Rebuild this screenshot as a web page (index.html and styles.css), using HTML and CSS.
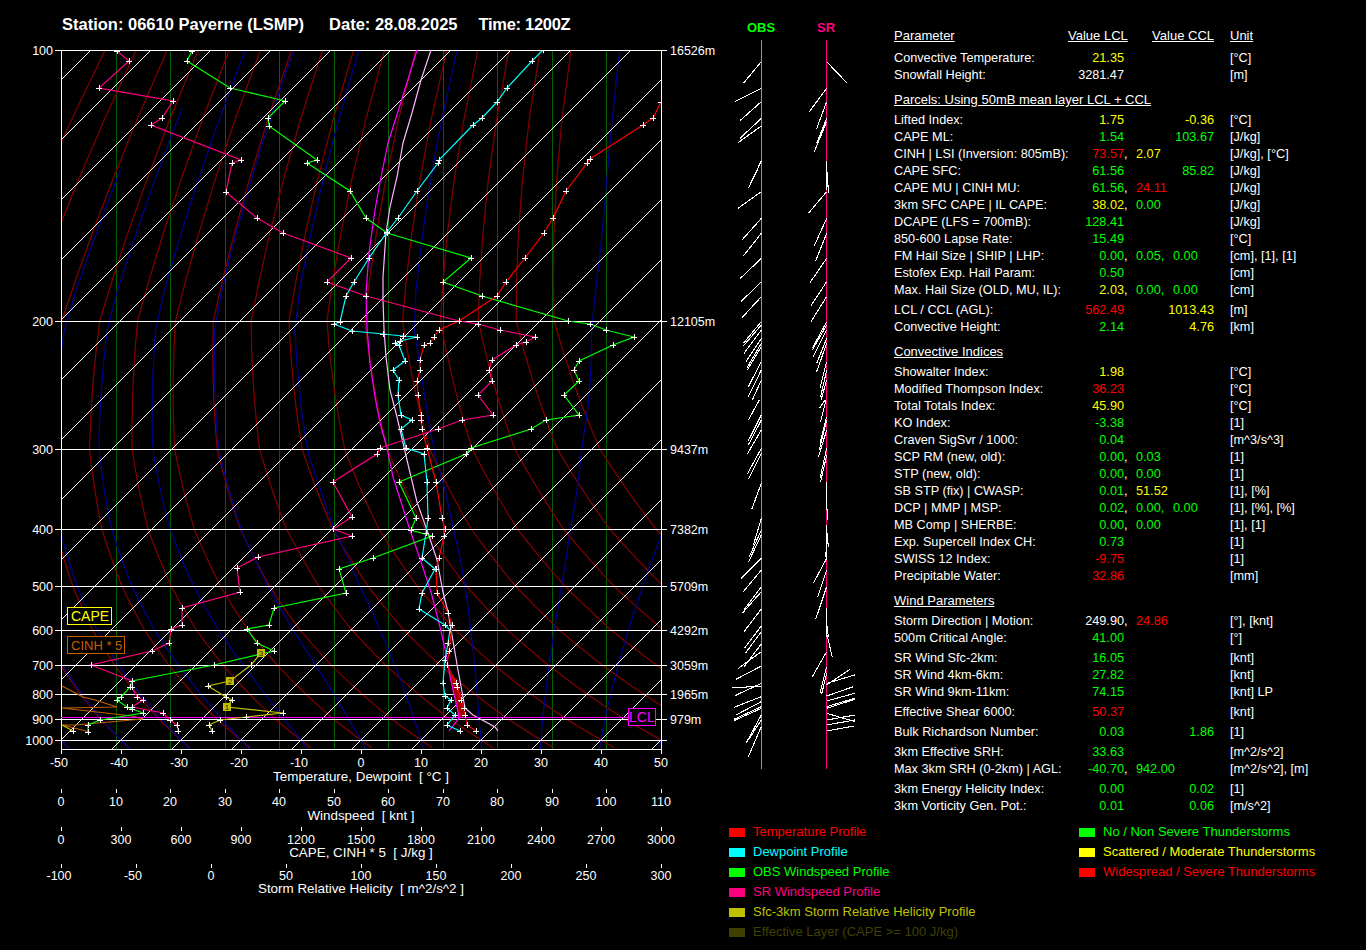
FILE: index.html
```html
<!DOCTYPE html>
<html lang="en">
<head>
<meta charset="utf-8">
<title>Station 06610 Payerne sounding</title>
<link rel="stylesheet" href="styles.css">
</head>
<body>
<div class="page">
  <section class="left">
    <header class="title">
      <span>Station: 06610 Payerne (LSMP)</span>
      <span>Date: 28.08.2025</span>
      <span>Time: 1200Z</span>
    </header>
    <svg class="chart" viewBox="0 40 720 910" width="720" height="910">
      <defs>
        <clipPath id="plot"><rect x="61" y="50" width="600" height="699"/></clipPath>
        <marker id="pt" markerUnits="userSpaceOnUse" markerWidth="8" markerHeight="8" refX="4" refY="4" overflow="visible"><path class="cross" d="M1 4H7M4 1V7"/></marker>
      </defs>
      <g id="grid" clip-path="url(#plot)"></g>

      <g class="isobars">
        <path d="M55 50.5H667M55 321.5H667M55 449.5H667M55 529.5H667M55 586.5H667M55 630.5H667M55 665.5H667M55 694.5H667M55 719.5H667M55 740.5H667"/>
        <path d="M61.5 50V749H661.5V50"/>
        <path d="M61.5 749v5M121.5 749v5M181.5 749v5M241.5 749v5M301.5 749v5M361.5 749v5M421.5 749v5M481.5 749v5M541.5 749v5M601.5 749v5M661.5 749v5"/>
        <path d="M61.5 789v4M116 789v4M170.5 789v4M225 789v4M279.5 789v4M334 789v4M388.5 789v4M443 789v4M497.5 789v4M552 789v4M606.5 789v4M661 789v4"/>
        <path d="M61.5 827v4M121.5 827v4M181.5 827v4M241.5 827v4M301.5 827v4M361.5 827v4M421.5 827v4M481.5 827v4M541.5 827v4M601.5 827v4M661.5 827v4"/>
        <path d="M61.5 864v4M136.5 864v4M211.5 864v4M286.5 864v4M361.5 864v4M436.5 864v4M511.5 864v4M586.5 864v4M661.5 864v4"/>
      </g>

      <g clip-path="url(#plot)" class="profiles">
        <polygon class="cape" points="449,670 458,683 462,697 458,700 465,708 465,716 459,719 456,705"/>
        <polyline class="cin" points="62,686 83,697 95,700 117,707 62,708 132,716 143,719 75,725 62,725 90,732"/>
        <polyline class="parcel" points="417,50 401,102 388,143 380,182 375,210 369,253 366,293 367,328 370,363 375,397 380,423 387,448 393,477 410,530 418,553 428,583 431,592 440,627 446,653 450,677 457,707 459,718 449,731"/>
        <polyline class="virtual" points="431,50 421,80 412,113 403,143 397,177 390,207 386,233 383,277 383,300 384,329 386,357 390,390 397,417 407,460 417,502 428,533 437,560 443,592 448,612 458,670 463,697 465,708 473,715 495,727 498,731"/>
        <path class="lcl" d="M61 717.5H628"/>
        <polyline class="obs" marker-start="url(#pt)" marker-mid="url(#pt)" marker-end="url(#pt)" points="192,51 187,61 230,88 285,101 268,118 269,126 317,160 307,163 350,191 366,218 387,233 471,258 443,282 482,296 568,321 590,324 606,330 634,337 613,345 579,361 574,370 579,381 564,395 579,415 546,420 531,429 471,448 466,454 399,482 416,518 411,530 432,536 373,558 339,569 346,593 274,608 269,625 247,629 257,643 274,651 214,665 132,681 130,687 121,697 117,700 127,707 132,709 143,713 100,720 88,725 88,732"/>
        <polyline class="sr" marker-start="url(#pt)" marker-mid="url(#pt)" marker-end="url(#pt)" points="117,51 129,61 99,88 173,101 162,118 151,125 241,160 232,163 226,192 257,218 283,233 351,258 327,282 366,296 459,321 478,324 500,330 535,337 526,342 516,345 492,360 489,370 492,381 478,395 493,415 462,420 438,429 380,448 377,454 333,482 352,517 333,529 352,536 258,557 237,568 240,592 182,608 182,625 171,629 169,643 152,651 91,665 132,681 132,687 137,697 143,700 132,707 163,713 170,720 177,725 178,731"/>
        <polyline class="dew" marker-start="url(#pt)" marker-mid="url(#pt)" marker-end="url(#pt)" points="543,50 532,61 507,88 497,102 482,118 473,125 439,160 438,163 417,191 398,218 387,232 369,258 354,282 346,296 340,322 334,324 352,331 383,334 403,336 417,337 400,341 395,343 399,345 405,361 393,370 399,380 398,395 401,415 412,420 401,429 406,448 424,454 427,482 428,518 426,533 422,558 435,569 422,593 419,609 445,625 450,630 448,643 445,660 443,683 445,696 451,700 447,708 455,715 447,725 460,731"/>
        <polyline class="temp" marker-start="url(#pt)" marker-mid="url(#pt)" marker-end="url(#pt)" points="661,102 653,118 643,125 590,159 587,163 566,191 553,218 544,233 525,258 506,282 497,296 459,321 439,330 434,337 430,343 424,345 420,360 420,370 417,381 418,395 421,415 421,420 422,429 427,448 436,482 442,518 445,529 444,536 439,558 436,569 437,593 448,613 452,625 449,651 447,665 456,683 457,687 461,700 464,708 465,715 467,725 476,731"/>
        <polyline class="srh" marker-mid="url(#pt)" marker-end="url(#pt)" points="261,653 251,665 230,681 208,686 226,697 232,700 227,707 283,713 246,717 220,720 209,725 212,731"/>
        <polyline class="srh" marker-end="url(#pt)" points="62,725 73,731"/>
        <g class="srhbox">
          <rect x="257" y="649" width="8" height="8"/><rect x="226" y="677" width="8" height="8"/><rect x="223" y="703" width="8" height="8"/>
        </g>
        <g class="srhnum">
          <text x="261" y="656">3</text><text x="230" y="684">2</text><text x="227" y="710">1</text>
        </g>
      </g>

      <g class="tags">
        <rect class="tag-cape" x="67.5" y="607.5" width="44" height="17"/>
        <text class="tagtxt-cape" x="71" y="621">CAPE</text>
        <rect class="tag-cin" x="67.5" y="636.5" width="57" height="17"/>
        <text class="tagtxt-cin" x="71" y="650">CINH * 5</text>
        <rect class="tag-lcl" x="628.5" y="708.5" width="27" height="17"/>
        <text class="tagtxt-lcl" x="629" y="722">LCL</text>
      </g>

      <g class="ax end">
        <text x="53" y="55">100</text><text x="53" y="326">200</text><text x="53" y="454">300</text><text x="53" y="534">400</text><text x="53" y="591">500</text><text x="53" y="635">600</text><text x="53" y="670">700</text><text x="53" y="699">800</text><text x="53" y="724">900</text><text x="53" y="745">1000</text>
      </g>
      <g class="ax">
        <text x="670" y="55">16526m</text><text x="670" y="326">12105m</text><text x="670" y="454">9437m</text><text x="670" y="534">7382m</text><text x="670" y="591">5709m</text><text x="670" y="635">4292m</text><text x="670" y="670">3059m</text><text x="670" y="699">1965m</text><text x="670" y="724">979m</text>
      </g>
      <g class="ax mid">
        <text x="59" y="767">-50</text><text x="119" y="767">-40</text><text x="179" y="767">-30</text><text x="239" y="767">-20</text><text x="299" y="767">-10</text><text x="361" y="767">0</text><text x="421" y="767">10</text><text x="481" y="767">20</text><text x="541" y="767">30</text><text x="601" y="767">40</text><text x="661" y="767">50</text>
        <text class="tt" x="361" y="781">Temperature, Dewpoint  [ °C ]</text>
        <text x="61" y="806">0</text><text x="116" y="806">10</text><text x="170" y="806">20</text><text x="225" y="806">30</text><text x="279" y="806">40</text><text x="334" y="806">50</text><text x="388" y="806">60</text><text x="443" y="806">70</text><text x="497" y="806">80</text><text x="552" y="806">90</text><text x="606" y="806">100</text><text x="661" y="806">110</text>
        <text class="tt" x="361" y="820">Windspeed  [ knt ]</text>
        <text x="61" y="844">0</text><text x="121" y="844">300</text><text x="181" y="844">600</text><text x="241" y="844">900</text><text x="301" y="844">1200</text><text x="361" y="844">1500</text><text x="421" y="844">1800</text><text x="481" y="844">2100</text><text x="541" y="844">2400</text><text x="601" y="844">2700</text><text x="661" y="844">3000</text>
        <text class="tt" x="361" y="857">CAPE, CINH * 5  [ J/kg ]</text>
        <text x="59" y="880">-100</text><text x="133" y="880">-50</text><text x="211" y="880">0</text><text x="286" y="880">50</text><text x="361" y="880">100</text><text x="436" y="880">150</text><text x="511" y="880">200</text><text x="586" y="880">250</text><text x="661" y="880">300</text>
        <text class="tt" x="361" y="893">Storm Relative Helicity  [ m^2/s^2 ]</text>
      </g>
    </svg>
  </section>

  <section class="right">
    <div class="upper">
      <svg class="barbs" viewBox="0 0 150 780" width="150" height="780">
        <text class="lab-obs" x="41" y="32">OBS</text>
        <text class="lab-sr" x="106" y="32">SR</text>
        <path class="staff-obs" d="M41.5 40V769"/>
        <path class="staff-sr" d="M106.5 40V769"/>
        <g transform="scale(0.33333)">
          <path class="barb" d="M124 185L70 250M124 265L45 305M124 305L60 362M124 355L60 415M124 378L54 428M124 482L85 565M121 490L88 560M124 575L54 625M124 655L66 720M124 700L70 768M124 775L60 836M124 845L63 905M124 890L66 953M124 965L70 1030M124 975L70 1038M124 990L72 1060M124 1015L78 1085M124 1030L80 1105M124 1040L82 1110M124 1085L85 1160M124 1110L85 1190M124 1140L97 1200"/>
          <path class="barb" d="M320 185L380 248M320 265L268 335M320 305L290 386M320 355L290 430M320 365L283 455M320 482L320 570M322 515L325 578M320 575L265 640M320 655L283 737M320 700L287 782M320 775L270 848M320 845L273 917M320 890L273 965M320 965L277 1045M320 975L277 1050M320 990L280 1070M320 1015L290 1090M320 1030L290 1115M320 1085L300 1165M320 1110L302 1190M320 1140L303 1200"/>
          <g transform="translate(0,1200)">
            <path class="barb" d="M118 0L85 60M124 45L85 122M124 60L85 135M124 90L82 162M124 145L82 222M124 160L85 238M124 250L95 328M124 355L100 435M124 390L88 470M124 405L85 487M124 475L63 536M124 510L70 575M124 560L72 630M124 575L67 640M124 627L72 695M124 678L73 745M124 695L76 760M124 732L72 800M124 755L55 805M124 798L48 838M124 850L45 887M124 858L36 864M124 890L42 922M124 905L48 945M124 920L42 958M124 925L42 962M124 945L78 1030M124 960L85 1020M124 980L85 1070"/>
            <path class="barb" d="M315 0L298 25M318 0L302 65M320 50L300 130M320 60L298 150M320 90L295 172M320 145L300 235M320 165L302 245M320 245L320 300M320 295L322 360M320 375L320 470M320 390L325 440M315 455L320 480M320 475L280 550M320 510L293 592M320 560L287 658M320 625L320 710M320 670L325 710M320 700L337 772M320 755L277 830M320 800L300 880M320 820L305 882M320 855L390 808M320 850L404 825M320 888L400 860M320 903L404 880M320 920L404 895M320 925L404 898M320 940L405 965M320 960L405 945M320 975L404 960M320 993L402 978"/>
          </g>
        </g>
      </svg>

      <div class="table">
        <div class="row head"><span class="lab">Parameter</span><span class="v1">Value LCL</span><span class="ccl">Value CCL</span><span class="unit">Unit</span></div>

        <div class="group g5">
          <div class="row"><span class="lab">Convective Temperature:</span><span class="v1 y">21.35</span><span class="unit">[°C]</span></div>
          <div class="row"><span class="lab">Snowfall Height:</span><span class="v1">3281.47</span><span class="unit">[m]</span></div>
        </div>

        <div class="group g8"><div class="row head"><span class="wide">Parcels: Using 50mB mean layer LCL + CCL</span></div></div>

        <div class="group g3">
          <div class="row"><span class="lab">Lifted Index:</span><span class="v1 y">1.75</span><span class="ccl y">-0.36</span><span class="unit">[°C]</span></div>
          <div class="row"><span class="lab">CAPE ML:</span><span class="v1 g">1.54</span><span class="ccl g">103.67</span><span class="unit">[J/kg]</span></div>
          <div class="row"><span class="lab">CINH | LSI (Inversion: 805mB):</span><span class="v1 r">73.57</span><span class="sep">,</span><span class="v2 y">2.07</span><span class="unit">[J/kg], [°C]</span></div>
          <div class="row"><span class="lab">CAPE SFC:</span><span class="v1 g">61.56</span><span class="ccl g">85.82</span><span class="unit">[J/kg]</span></div>
          <div class="row"><span class="lab">CAPE MU | CINH MU:</span><span class="v1 g">61.56</span><span class="sep">,</span><span class="v2 r">24.11</span><span class="unit">[J/kg]</span></div>
          <div class="row"><span class="lab">3km SFC CAPE | IL CAPE:</span><span class="v1 y">38.02</span><span class="sep">,</span><span class="v2 g">0.00</span><span class="unit">[J/kg]</span></div>
          <div class="row"><span class="lab">DCAPE (LFS = 700mB):</span><span class="v1 g">128.41</span><span class="unit">[J/kg]</span></div>
          <div class="row"><span class="lab">850-600 Lapse Rate:</span><span class="v1 g">15.49</span><span class="unit">[°C]</span></div>
          <div class="row"><span class="lab">FM Hail Size | SHIP | LHP:</span><span class="v1 g">0.00</span><span class="sep">,</span><span class="v2 g">0.05,</span><span class="v3 g">0.00</span><span class="unit">[cm], [1], [1]</span></div>
          <div class="row"><span class="lab">Estofex Exp. Hail Param:</span><span class="v1 g">0.50</span><span class="unit">[cm]</span></div>
          <div class="row"><span class="lab">Max. Hail Size (OLD, MU, IL):</span><span class="v1 y">2.03</span><span class="sep">,</span><span class="v2 g">0.00,</span><span class="v3 g">0.00</span><span class="unit">[cm]</span></div>
        </div>

        <div class="group g3">
          <div class="row"><span class="lab">LCL / CCL (AGL):</span><span class="v1 r">562.49</span><span class="ccl y">1013.43</span><span class="unit">[m]</span></div>
          <div class="row"><span class="lab">Convective Height:</span><span class="v1 g">2.14</span><span class="ccl y">4.76</span><span class="unit">[km]</span></div>
        </div>

        <div class="group g9"><div class="row head"><span class="wide">Convective Indices</span></div></div>

        <div class="group g3">
          <div class="row"><span class="lab">Showalter Index:</span><span class="v1 y">1.98</span><span class="unit">[°C]</span></div>
          <div class="row"><span class="lab">Modified Thompson Index:</span><span class="v1 r">36.23</span><span class="unit">[°C]</span></div>
          <div class="row"><span class="lab">Total Totals Index:</span><span class="v1 y">45.90</span><span class="unit">[°C]</span></div>
          <div class="row"><span class="lab">KO Index:</span><span class="v1 g">-3.38</span><span class="unit">[1]</span></div>
          <div class="row"><span class="lab">Craven SigSvr / 1000:</span><span class="v1 g">0.04</span><span class="unit">[m^3/s^3]</span></div>
          <div class="row"><span class="lab">SCP RM (new, old):</span><span class="v1 g">0.00</span><span class="sep">,</span><span class="v2 g">0.03</span><span class="unit">[1]</span></div>
          <div class="row"><span class="lab">STP (new, old):</span><span class="v1 g">0.00</span><span class="sep">,</span><span class="v2 g">0.00</span><span class="unit">[1]</span></div>
          <div class="row"><span class="lab">SB STP (fix) | CWASP:</span><span class="v1 g">0.01</span><span class="sep">,</span><span class="v2 y">51.52</span><span class="unit">[1], [%]</span></div>
          <div class="row"><span class="lab">DCP | MMP | MSP:</span><span class="v1 g">0.02</span><span class="sep">,</span><span class="v2 g">0.00,</span><span class="v3 g">0.00</span><span class="unit">[1], [%], [%]</span></div>
          <div class="row"><span class="lab">MB Comp | SHERBE:</span><span class="v1 g">0.00</span><span class="sep">,</span><span class="v2 g">0.00</span><span class="unit">[1], [1]</span></div>
          <div class="row"><span class="lab">Exp. Supercell Index CH:</span><span class="v1 g">0.73</span><span class="unit">[1]</span></div>
          <div class="row"><span class="lab">SWISS 12 Index:</span><span class="v1 r">-9.75</span><span class="unit">[1]</span></div>
          <div class="row"><span class="lab">Precipitable Water:</span><span class="v1 r">32.86</span><span class="unit">[mm]</span></div>
        </div>

        <div class="group g8"><div class="row head"><span class="wide">Wind Parameters</span></div></div>

        <div class="group g3">
          <div class="row"><span class="lab">Storm Direction | Motion:</span><span class="v1">249.90</span><span class="sep">,</span><span class="v2 r">24.86</span><span class="unit">[°], [knt]</span></div>
          <div class="row"><span class="lab">500m Critical Angle:</span><span class="v1 g">41.00</span><span class="unit">[°]</span></div>
        </div>
        <div class="group g3">
          <div class="row"><span class="lab">SR Wind Sfc-2km:</span><span class="v1 g">16.05</span><span class="unit">[knt]</span></div>
          <div class="row"><span class="lab">SR Wind 4km-6km:</span><span class="v1 g">27.82</span><span class="unit">[knt]</span></div>
          <div class="row"><span class="lab">SR Wind 9km-11km:</span><span class="v1 g">74.15</span><span class="unit">[knt] LP</span></div>
        </div>
        <div class="group g3">
          <div class="row"><span class="lab">Effective Shear 6000:</span><span class="v1 r">50.37</span><span class="unit">[knt]</span></div>
        </div>
        <div class="group g3">
          <div class="row"><span class="lab">Bulk Richardson Number:</span><span class="v1 g">0.03</span><span class="ccl g">1.86</span><span class="unit">[1]</span></div>
        </div>
        <div class="group g3">
          <div class="row"><span class="lab">3km Effective SRH:</span><span class="v1 g">33.63</span><span class="unit">[m^2/s^2]</span></div>
          <div class="row"><span class="lab">Max 3km SRH (0-2km) | AGL:</span><span class="v1 g">-40.70</span><span class="sep">,</span><span class="v2 g">942.00</span><span class="unit">[m^2/s^2], [m]</span></div>
        </div>
        <div class="group g3">
          <div class="row"><span class="lab">3km Energy Helicity Index:</span><span class="v1 g">0.00</span><span class="ccl g">0.02</span><span class="unit">[1]</span></div>
          <div class="row"><span class="lab">3km Vorticity Gen. Pot.:</span><span class="v1 g">0.01</span><span class="ccl g">0.06</span><span class="unit">[m/s^2]</span></div>
        </div>
      </div>
    </div>

    <div class="legends">
      <ul class="legend first">
        <li class="k-red">Temperature Profile</li>
        <li class="k-cyan">Dewpoint Profile</li>
        <li class="k-green">OBS Windspeed Profile</li>
        <li class="k-pink">SR Windspeed Profile</li>
        <li class="k-olive">Sfc-3km Storm Relative Helicity Profile</li>
        <li class="k-dim">Effective Layer (CAPE &gt;= 100 J/kg)</li>
      </ul>
      <ul class="legend">
        <li class="k-green">No / Non Severe Thunderstorms</li>
        <li class="k-yellow">Scattered / Moderate Thunderstorms</li>
        <li class="k-red">Widespread / Severe Thunderstorms</li>
      </ul>
    </div>
  </section>
</div>
<script src="script.js"></script>
</body>
</html>
```
FILE: styles.css
```css
* { box-sizing: border-box; }
html, body { margin: 0; padding: 0; background: #000; }
body { font-family: "Liberation Sans", Arial, sans-serif; font-size: 12.7px; color: #fff; }
.page { width: 1366px; height: 950px; display: flex; overflow: hidden; background: #000; }
.left { width: 720px; flex: none; display: flex; flex-direction: column; }
.title { height: 40px; padding: 14px 0 0 62px; display: flex; gap: 25px; font-size: 16.5px; line-height: 20px; font-weight: bold; white-space: pre; }
.title span:last-child { margin-left: -4px; letter-spacing: -0.3px; }
.chart { display: block; shape-rendering: crispEdges; }
.chart text, .barbs text { shape-rendering: auto; }

.isobars path { fill: none; stroke: #fff; stroke-width: 1; }
.gl-v { stroke: #006000; stroke-width: 1; fill: none; }
.gl-t { stroke: #fff; stroke-width: 1.1; fill: none; }
.gl-d, .gl-m { fill: none; stroke-width: 1.25; shape-rendering: geometricPrecision; }
.gl-d { stroke: #800000; }
.gl-m { stroke: #000090; }

.profiles polyline { fill: none; stroke-width: 1.2; shape-rendering: geometricPrecision; }
.profiles path { fill: none; stroke-width: 1; }
.cross { stroke: #fff; stroke-width: 1; fill: none; shape-rendering: crispEdges; }
.temp { stroke: #ff0000; }
.dew { stroke: #00ffff; }
.obs { stroke: #00ff00; }
.sr { stroke: #ff0080; }
.srh { stroke: #c0c000; }
.cin { stroke: #c06000; }
.parcel { stroke: #ff00ff; }
.virtual { stroke: #ffb8ff; }
.lcl { stroke: #ff00ff; }
.cape { fill: #a00000; stroke: none; }
.srhbox rect { fill: #c0c000; }
.srhnum text { fill: #302000; font-size: 8px; text-anchor: middle; }

.tags rect { fill: #000; stroke-width: 1; }
.tags text { font-size: 14px; }
.tag-cape { stroke: #ffff00; }
.tagtxt-cape { fill: #ffff00; }
.tag-cin { stroke: #c06000; }
.tags .tagtxt-cin { fill: #c06000; font-size: 13px; }
.tag-lcl { stroke: #ff00ff; }
.tagtxt-lcl { fill: #ff00ff; }

.ax text { fill: #fff; font-size: 12.5px; white-space: pre; }
.ax.end text { text-anchor: end; }
.ax.mid text { text-anchor: middle; }
.ax.mid .tt { font-size: 13.4px; }

.right { flex: 1; display: flex; flex-direction: column; }
.upper { height: 822px; display: flex; }
.barbs { display: block; flex: none; shape-rendering: crispEdges; }
.lab-obs, .lab-sr { font-size: 13px; font-weight: bold; text-anchor: middle; }
.lab-obs { fill: #00ff00; }
.lab-sr { fill: #ff0080; }
.staff-obs { stroke: #00ff00; fill: none; }
.staff-sr { stroke: #ff0080; fill: none; }
.barb { stroke: #fff; stroke-width: 3.2; fill: none; }

.table { margin-left: 24px; padding-top: 28px; width: 460px; }
.row { display: grid; grid-template-columns: 174px 56px 12px 37px 41px 16px 1fr; height: 17px; line-height: 17px; white-space: pre; }
.lab { grid-column: 1; }
.v1 { grid-column: 2; text-align: right; white-space: nowrap; direction: rtl; unicode-bidi: plaintext; }
.sep { grid-column: 3; }
.v2 { grid-column: 4; }
.v3 { grid-column: 5; }
.ccl { grid-column: 4 / 6; text-align: right; }
.unit { grid-column: 7; }
.wide { grid-column: 1 / -1; }
.head span { text-decoration: underline; font-size: 13px; line-height: 15px; }
.y { color: #ffff00; }
.g { color: #00ff00; }
.r { color: #ff0000; }
.g3 { margin-top: 3px; }
.g5 { margin-top: 5px; }
.g8 { margin-top: 8px; }
.g9 { margin-top: 8px; }

.legends { display: flex; height: 128px; padding-left: 9px; }
.legend { list-style: none; margin: 0; padding: 0; font-size: 13px; }
.legend.first { width: 350px; }
.legend li { height: 20px; line-height: 20px; display: flex; align-items: center; gap: 8px; white-space: pre; }
.legend li::before { content: ""; width: 16px; height: 9px; background: currentColor; flex: none; }
.k-red { color: #ff0000; }
.k-cyan { color: #00ffff; }
.k-green { color: #00ff00; }
.k-pink { color: #ff0080; }
.k-olive { color: #c0c000; }
.k-dim { color: #404000; }
.k-yellow { color: #ffff00; }
```
FILE: script.js
```js
// Thermodynamic background of the sounding diagram: isotherms, dry and moist adiabats.
(function () {
  var NS = "http://www.w3.org/2000/svg";
  var grid = document.getElementById("grid");
  var levels = [[100, 50], [200, 321], [300, 449], [400, 529], [500, 586], [600, 630], [700, 665], [800, 694], [900, 719], [1000, 740], [1046, 749]];

  function yOf(p) {
    for (var i = 0; i < levels.length - 1; i++) {
      var a = levels[i], b = levels[i + 1];
      if (p <= b[0] || i === levels.length - 2) {
        var f = (Math.log(p) - Math.log(a[0])) / (Math.log(b[0]) - Math.log(a[0]));
        return a[1] + f * (b[1] - a[1]);
      }
    }
  }
  function xOf(t, y) { return 361 + 6 * t + (740 - y); }
  function draw(cls, pts) {
    var el = document.createElementNS(NS, "polyline");
    el.setAttribute("class", cls);
    el.setAttribute("points", pts.map(function (q) { return q[0].toFixed(1) + "," + q[1].toFixed(1); }).join(" "));
    grid.appendChild(el);
  }

  for (var k = 1; k <= 10; k++) {
    var vx = Math.round(61 + 54.5 * k) + 0.5;
    draw("gl-v", [[vx, 50], [vx, 749]]);
  }

  for (var th = -50; th <= 100; th += 10) {
    var dry = [];
    for (var p = 100; p <= 1046; p += 20) {
      var yd = yOf(p);
      dry.push([xOf((th + 273.15) * Math.pow(p / 1000, 0.286) - 273.15, yd), yd]);
    }
    draw("gl-d", dry);
  }

  function slope(T, p) {
    var es = 6.112 * Math.exp(17.67 * (T - 273.15) / (T - 29.65));
    var rs = 0.622 * es / Math.max(p - es, 1);
    return (287 * T + 2.5e6 * rs) / (1004 + 2.5e6 * 2.5e6 * rs * 0.622 / (287 * T * T)) / p;
  }
  for (var w = -50; w <= 50; w += 10) {
    var moist = [];
    var T = w + 273.15, P = 1000;
    while (P < 1046) { T += slope(T, P) * 2; P += 2; }
    var n = 0;
    while (P > 100 && T - 273.15 > -135) {
      if (n % 10 === 0) { var ym = yOf(P); moist.push([xOf(T - 273.15, ym), ym]); }
      T -= slope(T, P) * 2; P -= 2; n++;
    }
    var ye = yOf(P); moist.push([xOf(T - 273.15, ye), ye]);
    draw("gl-m", moist);
  }

  for (var s = 0; s <= 21; s++) {
    var c = 141 + 60 * s;
    draw("gl-t", [[61, c - 61], [c - 50, 50]]);
  }
})();
```
